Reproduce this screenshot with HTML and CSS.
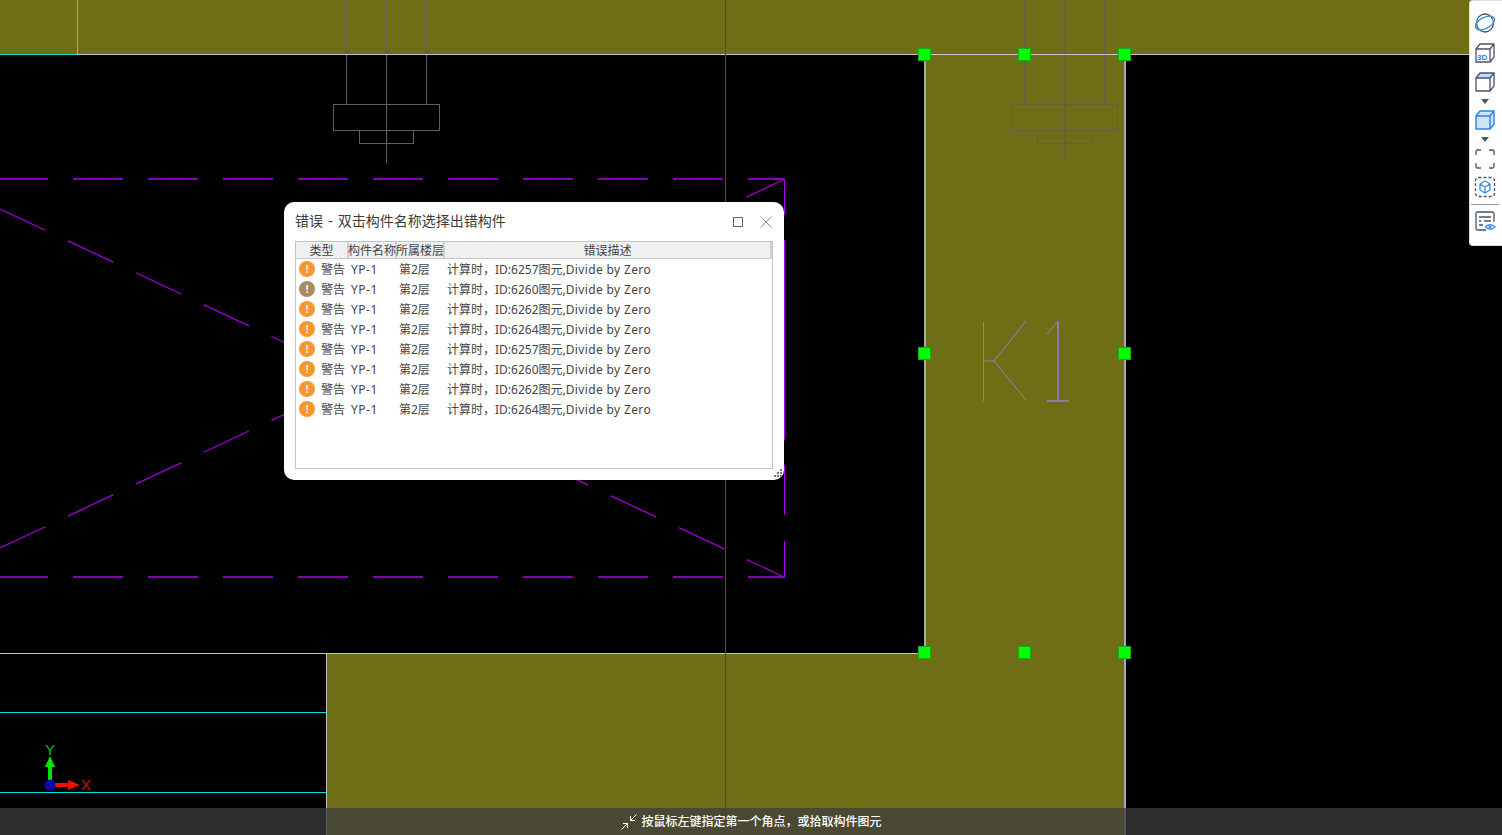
FILE: index.html
```html
<!DOCTYPE html>
<html lang="zh">
<head>
<meta charset="utf-8">
<title>错误</title>
<link rel="stylesheet" href="styles.css">
</head>
<body>
<div class="app">
  <svg class="canvas" width="1502" height="835" viewBox="0 0 1502 835">
    <g class="olive">
      <rect x="0" y="0" width="1502" height="54"/>
      <rect x="925" y="54" width="199" height="600"/>
      <rect x="327" y="653" width="797" height="182"/>
    </g>
    <g class="bolt" shape-rendering="crispEdges">
      <path d="M346.5 0V104M386.5 0V163M426.5 0V104M333.5 104.5H439.5V130.5H333.5ZM359.5 130.5V143.5H413.5V130.5"/>
    </g>
    <g class="bolt on-olive" shape-rendering="crispEdges">
      <path d="M1024.5 54V104M1064.5 0V163M1104.5 54V104M1011.5 104.5H1117.5V130.5H1011.5ZM1037.5 130.5V143.5H1091.5V130.5"/>
      <path class="bolt-top" d="M1024.5 0V54M1104.5 0V54"/>
    </g>
    <g class="cyan" shape-rendering="crispEdges">
      <path d="M77.5 0V54M0 54.5H77M0 712.5H326M0 792.5H326"/>
    </g>
    <g class="edge" shape-rendering="crispEdges">
      <path d="M77 54.5H1469M0 653.5H924M326.5 653V835"/>
      <path class="edge-bold" d="M925 54V653M1125 54V835"/>
    </g>
    <path class="guide" shape-rendering="crispEdges" d="M725.5 0V835"/>
    <g class="purple">
      <path class="dash flat" d="M0 179H784"/>
      <path class="dash flat" d="M0 577H784"/>
      <path class="side" d="M784.5 179V215M784.5 240V440M784.5 465V515M784.5 541V577"/>
      <path class="dash" d="M0 209L785 577.500"/>
      <path class="dash" d="M0 548L785 179"/>
    </g>
    <g class="kone">
      <path d="M983.500 322V401M983 361H994M994 361L1026 321M994 361L1026 400M1047 334L1058 321"/>
      <path class="kone-bold" d="M1058 321V401M1047 401H1069"/>
    </g>
    <g class="handles">
      <rect x="918.500" y="48.500" width="12" height="12"/>
      <rect x="1018.500" y="48.500" width="12" height="12"/>
      <rect x="1118.500" y="48.500" width="12" height="12"/>
      <rect x="918.500" y="347.500" width="12" height="12"/>
      <rect x="1118.500" y="347.500" width="12" height="12"/>
      <rect x="918.500" y="646.500" width="12" height="12"/>
      <rect x="1018.500" y="646.500" width="12" height="12"/>
      <rect x="1118.500" y="646.500" width="12" height="12"/>
    </g>
    <g class="axes">
      <rect class="ax-g" x="48" y="766" width="4" height="20"/>
      <path class="ax-g" d="M50 756L55 767H45Z"/>
      <rect class="ax-r" x="55" y="783" width="14" height="4"/>
      <path class="ax-r" d="M68 780L80 785L68 790Z"/>
      <circle class="ax-b" cx="50" cy="785" r="5.500"/>
      <text class="ax-t ax-ty" x="50" y="755">Y</text>
      <text class="ax-t ax-tx" x="86" y="790">X</text>
    </g>
  </svg>

  <section class="dialog">
    <header class="dialog-head">
      <h1 class="dialog-title">错误 - 双击构件名称选择出错构件</h1>
      <svg class="win-btn max" width="12" height="12" viewBox="0 0 12 12"><rect x="1.500" y="1.500" width="9" height="9"/></svg>
      <svg class="win-btn close" width="12" height="12" viewBox="0 0 12 12"><path d="M.5 .5L11.500 11.500M11.500 .5L.5 11.500"/></svg>
    </header>
    <div class="table">
      <div class="grid head">
        <div class="th">类型</div><div class="th">构件名称</div><div class="th">所属楼层</div><div class="th">错误描述</div>
      </div>
      <div class="grid row"><div class="td type"><span class="warn">!</span>警告</div><div class="td code">YP-1</div><div class="td">第2层</div><div class="td">计算时，ID:6257图元,<span class="latin">Divide by Zero</span></div></div>
      <div class="grid row"><div class="td type"><span class="warn muted">!</span>警告</div><div class="td code">YP-1</div><div class="td">第2层</div><div class="td">计算时，ID:6260图元,<span class="latin">Divide by Zero</span></div></div>
      <div class="grid row"><div class="td type"><span class="warn">!</span>警告</div><div class="td code">YP-1</div><div class="td">第2层</div><div class="td">计算时，ID:6262图元,<span class="latin">Divide by Zero</span></div></div>
      <div class="grid row"><div class="td type"><span class="warn">!</span>警告</div><div class="td code">YP-1</div><div class="td">第2层</div><div class="td">计算时，ID:6264图元,<span class="latin">Divide by Zero</span></div></div>
      <div class="grid row"><div class="td type"><span class="warn">!</span>警告</div><div class="td code">YP-1</div><div class="td">第2层</div><div class="td">计算时，ID:6257图元,<span class="latin">Divide by Zero</span></div></div>
      <div class="grid row"><div class="td type"><span class="warn">!</span>警告</div><div class="td code">YP-1</div><div class="td">第2层</div><div class="td">计算时，ID:6260图元,<span class="latin">Divide by Zero</span></div></div>
      <div class="grid row"><div class="td type"><span class="warn">!</span>警告</div><div class="td code">YP-1</div><div class="td">第2层</div><div class="td">计算时，ID:6262图元,<span class="latin">Divide by Zero</span></div></div>
      <div class="grid row"><div class="td type"><span class="warn">!</span>警告</div><div class="td code">YP-1</div><div class="td">第2层</div><div class="td">计算时，ID:6264图元,<span class="latin">Divide by Zero</span></div></div>
    </div>
    <svg class="grip" width="9" height="9" viewBox="0 0 9 9"><path d="M7 0h2v2H7zM4 3h2v2H4zM7 3h2v2H7zM1 6h2v2H1zM4 6h2v2H4zM7 6h2v2H7z"/></svg>
  </section>

  <aside class="toolbar">
    <svg class="tool t-orbit" width="22" height="20" viewBox="0 0 22 20">
      <ellipse class="s-grey" cx="11" cy="10" rx="8.500" ry="9"/>
      <ellipse class="s-blue" cx="11" cy="10" rx="10.500" ry="5.500" transform="rotate(-28 11 10)"/>
    </svg>
    <svg class="tool t-3d" width="22" height="20" viewBox="0 0 22 20">
      <path class="s-grey" d="M2 6L6 1H20V14L16 19H2ZM2 6H16V19M16 6L20 1"/>
      <text class="label-3d" x="3" y="16.500">3D</text>
    </svg>
    <svg class="tool t-top" width="22" height="20" viewBox="0 0 22 20">
      <path class="f-light" d="M2 6L6 1H20L16 6Z"/>
      <path class="s-grey" d="M2 6L6 1H20V14L16 19H2ZM2 6H16V19M16 6L20 1"/>
    </svg>
    <svg class="caret" width="8" height="5" viewBox="0 0 8 5"><path d="M0 0H8L4 5Z"/></svg>
    <svg class="tool t-solid" width="22" height="20" viewBox="0 0 22 20">
      <path class="f-solid" d="M2 6L6 1H20V14L16 19H2Z"/>
      <path class="s-bluestrong" d="M2 6L6 1H20V14L16 19H2ZM2 6H16V19M16 6L20 1"/>
    </svg>
    <svg class="caret c-2" width="8" height="5" viewBox="0 0 8 5"><path d="M0 0H8L4 5Z"/></svg>
    <svg class="tool t-frame" width="22" height="20" viewBox="0 0 22 20">
      <path class="s-grey" d="M2 6V2.500Q2 1 3.500 1H7M15 1H18.500Q20 1 20 2.500V6M20 14V17.500Q20 19 18.500 19H15M7 19H3.500Q2 19 2 17.500V14"/>
    </svg>
    <svg class="tool t-dash" width="22" height="20" viewBox="0 0 22 20">
      <rect class="s-grey dashy" x="1.500" y="0.500" width="19" height="19" rx="3"/>
      <path class="s-blue" d="M11 4L16 7V13L11 16L6 13V7ZM6 7L11 10L16 7M11 10V16"/>
    </svg>
    <div class="tool-sep"></div>
    <svg class="tool t-list" width="22" height="20" viewBox="0 0 22 20">
      <path class="s-grey" d="M12 19H3.500Q2 19 2 17.500V2.500Q2 1 3.500 1H18.500Q20 1 20 2.500V11M5 6H17M5 10H7M10 10H17M5 14H9"/>
      <path class="s-blue" d="M11.500 16Q16 11.500 21 16Q16 20.500 11.500 16Z"/>
      <circle class="dot-blue" cx="16" cy="16" r="1.500"/>
    </svg>
  </aside>

  <footer class="status">
    <svg class="status-icon" width="16" height="16" viewBox="0 0 16 16">
      <path d="M15.500 .5L9.500 6.500M9.500 2V6.500H14M.5 15.500L6.500 9.500M2 9.500H6.500V14"/>
    </svg>
    <span class="status-text">按鼠标左键指定第一个角点，或拾取构件图元</span>
  </footer>
</div>
</body>
</html>
```
FILE: styles.css
```css
* { box-sizing: border-box; }
html, body { margin: 0; padding: 0; height: 100%; overflow: hidden; background: #000; }
body { font-family: "Noto Sans", "Noto Sans CJK SC", sans-serif; }
.app { position: relative; width: 1502px; height: 835px; overflow: hidden; background: #000; }

/* CAD drawing */
.canvas { position: absolute; left: 0; top: 0; display: block; }
.olive { fill: #6f6d16; }
.bolt path { fill: none; stroke: #5f5f5f; stroke-width: 1; }
.bolt.on-olive path { stroke: #5f5f4a; }
.bolt .bolt-top { stroke: #5f5f5f; }
.cyan path { fill: none; stroke: #00e6e6; stroke-width: 1; }
.edge path { fill: none; stroke: #c4c4c4; stroke-width: 1; }
.edge .edge-bold { stroke: #a8a8b8; stroke-width: 2; }
.guide { fill: none; stroke: #c81818; stroke-width: 1; }
.dash { fill: none; stroke: #a000d8; stroke-width: 1.300; stroke-dasharray: 50 25; }
.dash.flat { stroke: #8400b4; stroke-width: 2; stroke-dashoffset: 2; }
.side { fill: none; stroke: #b000f0; stroke-width: 1; }
.kone path { fill: none; stroke: #9280c0; stroke-width: 1; }
.kone .kone-bold { stroke: #8d78a8; stroke-width: 2; }
.handles rect { fill: #00ff00; stroke: #12b012; stroke-width: 1; }
.ax-g { fill: #00e600; }
.ax-r { fill: #f01010; }
.ax-b { fill: #0a0aa8; }
.ax-t { font-family: "Liberation Sans", sans-serif; font-size: 15px; text-anchor: middle; }
.ax-ty { fill: #00c000; }
.ax-tx { fill: #d01010; }

/* Error dialog */
.dialog {
  position: absolute; left: 284px; top: 202px; width: 500px; height: 278px;
  background: #fff; border-radius: 10px; padding: 0 11px;
  display: flex; flex-direction: column;
}
.dialog-head { height: 39px; display: flex; align-items: center; flex: none; }
.dialog-title { margin: 0; flex: 1; font-size: 14px; font-weight: 400; color: #3c3c3c; line-height: 37px; height: 39px; white-space: nowrap; word-spacing: 1.500px; }
.win-btn { fill: none; stroke-width: 1; flex: none; }
.win-btn.max { stroke: #666; margin-right: 16px; }
.win-btn.close { stroke: #888; margin-right: 1px; }

.table { width: 478px; height: 228px; border: 1px solid #c4c4c4; flex: none; background: #fff; }
.grid { display: grid; grid-template-columns: 51px 48px 48px 329px; }
.head { grid-template-columns: 53px 48px 48px 327px; height: 17px; background: #f0f0f0; border-bottom: 1px solid #c8c8c8; }
.th { font-size: 12px; line-height: 17px; height: 16px; display: flex; justify-content: center; color: #444; white-space: nowrap; border-right: 2px solid #d0d0d0; }
.row { height: 20px; }
.td { font-size: 12px; line-height: 22px; height: 20px; color: #444; padding-left: 4px; white-space: nowrap; }
.td.code { letter-spacing: .5px; }
.latin { letter-spacing: .36px; }
.td.type { display: flex; align-items: flex-start; padding-left: 3px; gap: 6px; }
.warn {
  width: 16px; height: 16px; margin-top: 2px; border-radius: 50%; flex: none; background: #f7952f;
  color: #fff; font: 700 11px/16px "Liberation Sans", sans-serif; text-align: center;
}
.warn.muted { background: #a98b64; }
.grip { position: absolute; right: 2px; bottom: 2px; fill: #777; }

/* Right toolbar */
.toolbar {
  position: absolute; right: 0; top: 0; width: 33px; height: 246px;
  background: #fff; border: 1px solid #dcdcdc; border-right: 0; border-radius: 4px 0 0 4px;
  display: flex; flex-direction: column; align-items: center; padding: 12px 2px 0 0;
}
.tool { display: block; flex: none; overflow: visible; }
.s-grey { fill: none; stroke: #4a5468; stroke-width: 1.300; }
.s-blue { fill: none; stroke: #3a8ee8; stroke-width: 1.300; }
.s-bluestrong { fill: none; stroke: #2f80e0; stroke-width: 1.400; }
.f-light { fill: #bcdcfb; }
.f-solid { fill: #cfe4fb; }
.dot-blue { fill: #3a8ee8; }
.dashy { stroke-dasharray: 3 2; }
.label-3d { font: 700 8px "Liberation Sans", sans-serif; fill: #2f80e0; }
.caret { fill: #4a5468; display: block; flex: none; margin-top: 7px; }
.t-3d { margin-top: 10px; }
.t-top { margin-top: 9px; }
.t-solid { margin-top: 6px; }
.caret.c-2 { margin-top: 7px; }
.t-frame { margin-top: 7px; }
.t-dash { margin-top: 8px; }
.tool-sep { width: 28px; height: 1px; background: #9a9a9a; margin-top: 7px; flex: none; }
.t-list { margin-top: 6px; }

/* Status bar */
.status {
  position: absolute; left: 0; right: 0; bottom: 0; height: 27px;
  background: rgba(61, 61, 61, .75);
  display: flex; align-items: center; justify-content: center; gap: 4px; padding-left: 1px;
}
.status-icon { fill: none; stroke: #fff; stroke-width: 1; flex: none; }
.status-text { font-size: 12px; font-weight: 500; color: #fff; line-height: 27px; white-space: nowrap; }
```
